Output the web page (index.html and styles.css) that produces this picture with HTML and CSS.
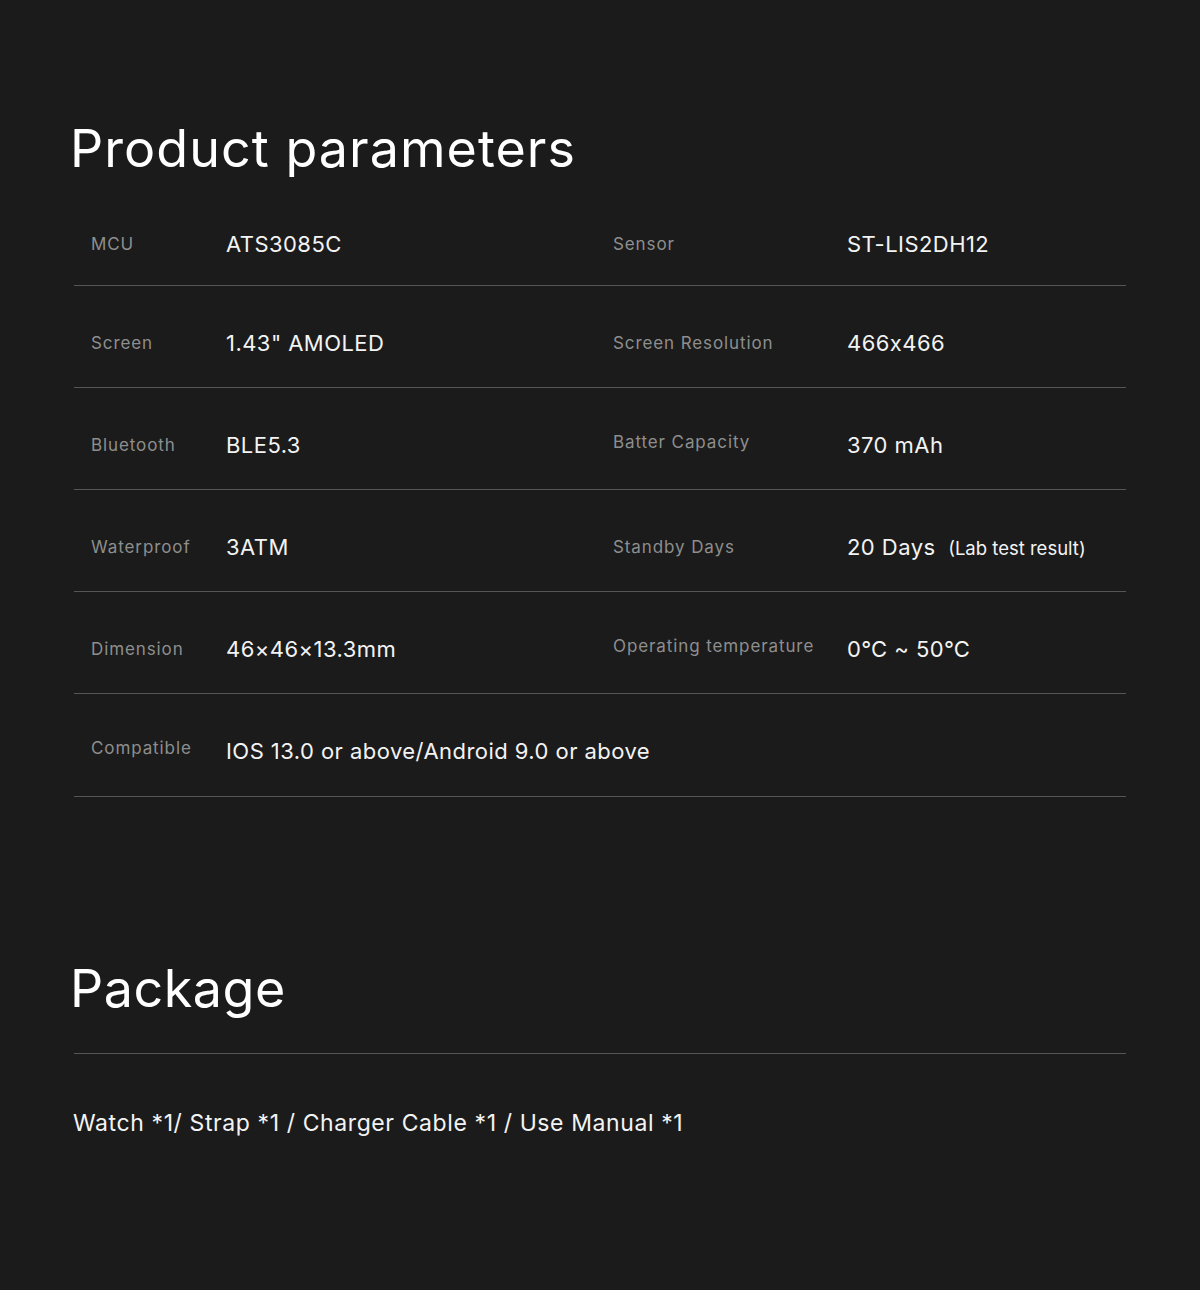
FILE: index.html
```html
<!DOCTYPE html>
<html lang="en">
<head>
<meta charset="utf-8">
<title>Product parameters</title>
<link rel="stylesheet" href="styles.css">
</head>
<body>
<main class="page">
  <section class="params">
    <h1 class="title">Product parameters</h1>
    <div class="table">
      <div class="row first">
        <div class="cell"><span class="label">MCU</span><span class="value">ATS3085C</span></div>
        <div class="cell right"><span class="label">Sensor</span><span class="value">ST-LIS2DH12</span></div>
      </div>
      <div class="row">
        <div class="cell"><span class="label">Screen</span><span class="value">1.43" AMOLED</span></div>
        <div class="cell right"><span class="label">Screen Resolution</span><span class="value">466x466</span></div>
      </div>
      <div class="row">
        <div class="cell"><span class="label">Bluetooth</span><span class="value">BLE5.3</span></div>
        <div class="cell right"><span class="label label-up">Batter Capacity</span><span class="value">370 mAh</span></div>
      </div>
      <div class="row">
        <div class="cell"><span class="label">Waterproof</span><span class="value">3ATM</span></div>
        <div class="cell right"><span class="label">Standby Days</span><span class="value">20 Days <small class="note">(Lab test result)</small></span></div>
      </div>
      <div class="row">
        <div class="cell"><span class="label">Dimension</span><span class="value">46×46×13.3mm</span></div>
        <div class="cell right"><span class="label label-up">Operating temperature</span><span class="value">0℃ ~ 50℃</span></div>
      </div>
      <div class="row last">
        <div class="cell wide"><span class="label label-up">Compatible</span><span class="value">IOS 13.0 or above/Android 9.0 or above</span></div>
      </div>
    </div>
  </section>
  <section class="package">
    <h2 class="title pkg">Package</h2>
    <div class="rule"></div>
    <p class="contents">Watch *1/ Strap *1 / Charger Cable *1 / Use Manual *1</p>
  </section>
</main>
</body>
</html>
```

FILE: styles.css
```css
html, body {
  margin: 0;
  padding: 0;
  background: #1b1b1b;
}
body {
  font-family: Inter, "Noto Sans", "DejaVu Sans", sans-serif;
  color: #f3f3f3;
}
.page {
  width: 1200px;
  min-height: 1290px;
  padding: 118px 74px 0 74px;
  box-sizing: border-box;
}
.title {
  margin: 0 0 0 -4px;
  font-weight: 400;
  font-size: 52px;
  line-height: 62px;
  letter-spacing: 1.05px;
  color: #ffffff;
}
.title.pkg {
  letter-spacing: 0.55px;
}
.table {
  margin-top: 4px;
}
.row {
  display: flex;
  height: 102px;
  box-sizing: border-box;
  border-bottom: 1px solid #555555;
  align-items: flex-start;
  padding-top: 45px;
}
.row.first {
  padding-top: 48px;
}
.row.last {
  height: 103px;
}
.cell {
  display: flex;
  align-items: center;
  width: 539px;
  height: 24px;
}
.cell.right {
  width: 513px;
}
.label {
  flex: 0 0 auto;
  width: 135px;
  padding-left: 17px;
  font-size: 17px;
  letter-spacing: 0.9px;
  color: #8e8e8e;
}
.label-up {
  position: relative;
  top: -3px;
}
.cell.right .label {
  width: 234px;
  padding-left: 0;
}
.value {
  font-size: 22px;
  letter-spacing: 0.45px;
  color: #f3f3f3;
  white-space: nowrap;
}
.note {
  font-size: 18.5px;
  letter-spacing: 0;
  margin-left: 6px;
}
.package {
  padding-top: 161px;
}
.rule {
  margin-top: 33px;
  height: 1px;
  background: #555555;
}
.contents {
  margin: 55px 0 0 -1px;
  font-size: 23px;
  letter-spacing: 0.6px;
  color: #f3f3f3;
}
```
